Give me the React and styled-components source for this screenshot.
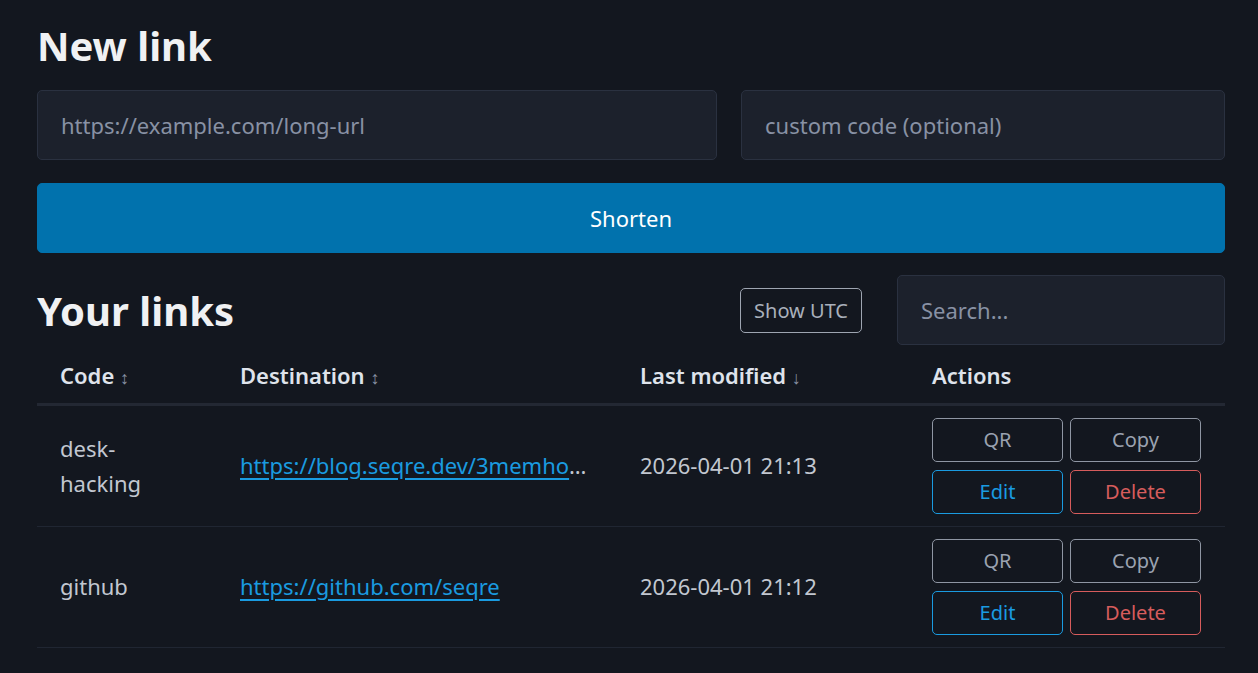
import React from "react";
import styled, { createGlobalStyle } from "styled-components";

const GlobalStyle = createGlobalStyle`
  * { box-sizing: border-box; }
  html, body { margin: 0; padding: 0; background: #13171f; }
  body {
    color: #c2c7d0;
    font-family: "Noto Sans", "Open Sans", sans-serif;
    font-size: 22px;
    line-height: 1.5;
  }
`;

const links = [
  {
    code: "desk-hacking",
    url: "https://blog.seqre.dev/3memhome-desk-hacking",
    modified: "2026-04-01 21:13",
  },
  {
    code: "github",
    url: "https://github.com/seqre",
    modified: "2026-04-01 21:12",
  },
];

export default function App() {
  return (
    <>
      <GlobalStyle />
      <Main>
        <Title>New link</Title>
        <FormRow>
          <Input placeholder="https://example.com/long-url" $wide />
          <Input placeholder="custom code (optional)" />
        </FormRow>
        <PrimaryButton>Shorten</PrimaryButton>

        <ListHeader>
          <Title as="h2">Your links</Title>
          <Tools>
            <SmallButton>Show UTC</SmallButton>
            <SearchInput placeholder="Search..." />
          </Tools>
        </ListHeader>

        <Table>
          <colgroup>
            <col style={{ width: 180 }} />
            <col style={{ width: 400 }} />
            <col style={{ width: 292 }} />
            <col style={{ width: 316 }} />
          </colgroup>
          <thead>
            <tr>
              <Th>Code <Sort>↕</Sort></Th>
              <Th>Destination <Sort>↕</Sort></Th>
              <Th>Last modified <Sort>↓</Sort></Th>
              <Th>Actions</Th>
            </tr>
          </thead>
          <tbody>
            {links.map((l) => (
              <tr key={l.code}>
                <CodeCell>{l.code}</CodeCell>
                <Td $clip>
                  <Link href={l.url}>{l.url}</Link>
                </Td>
                <Td>{l.modified}</Td>
                <Td>
                  <Actions>
                    <ActionButton>QR</ActionButton>
                    <ActionButton>Copy</ActionButton>
                    <ActionButton $tone="primary">Edit</ActionButton>
                    <ActionButton $tone="danger">Delete</ActionButton>
                  </Actions>
                </Td>
              </tr>
            ))}
          </tbody>
        </Table>
      </Main>
    </>
  );
}

const Main = styled.main`
  padding: 23px 33px 0 37px;
`;

const Title = styled.h1`
  margin: 0;
  color: #f0f1f3;
  font-size: 40px;
  font-weight: 700;
  line-height: 45px;
`;

const FormRow = styled.div`
  display: flex;
  gap: 24px;
  margin-top: 22px;
`;

const Input = styled.input`
  height: 70px;
  flex: ${(p) => (p.$wide ? "0 0 680px" : "1")};
  min-width: 0;
  padding: 0 23px;
  background: #1c212c;
  border: 1px solid #2a3140;
  border-radius: 5px;
  color: #c2c7d0;
  font-family: inherit;
  font-size: 22px;
  outline: none;
  &::placeholder { color: #8891a4; }
`;

const PrimaryButton = styled.button`
  display: block;
  width: 100%;
  height: 70px;
  margin-top: 23px;
  background: #0172ad;
  border: 1px solid #0172ad;
  border-radius: 5px;
  color: #ffffff;
  font-family: inherit;
  font-size: 22px;
  cursor: pointer;
`;

const ListHeader = styled.div`
  display: flex;
  align-items: center;
  justify-content: space-between;
  margin-top: 22px;
`;

const Tools = styled.div`
  display: flex;
  align-items: center;
  gap: 35px;
`;

const SmallButton = styled.button`
  height: 45px;
  padding: 0 13px;
  background: transparent;
  border: 1px solid #9ea5b1;
  border-radius: 5px;
  color: #a9b0bb;
  font-family: inherit;
  font-size: 20px;
  cursor: pointer;
`;

const SearchInput = styled(Input)`
  flex: 0 0 328px;
`;

const Table = styled.table`
  width: 100%;
  margin-top: 10px;
  border-collapse: collapse;
  table-layout: fixed;
`;

const Th = styled.th`
  height: 49px;
  padding: 0 23px 7px;
  text-align: left;
  font-weight: 600;
  color: #dfe3eb;
  border-bottom: 3px solid #232833;
  vertical-align: middle;
`;

const Sort = styled.span`
  font-weight: 400;
  font-size: 18px;
  color: #8891a4;
`;

const Td = styled.td`
  padding: 12px 23px 12px;
  border-bottom: 1px solid #202632;
  vertical-align: middle;
  color: #c2c7d0;
  line-height: 35px;
  ${(p) =>
    p.$clip &&
    `
    white-space: nowrap;
    overflow: hidden;
    text-overflow: ellipsis;
  `}
`;

const CodeCell = styled(Td)`
  padding-right: 60px;
`;

const Link = styled.a`
  color: #1a9be0;
  text-decoration: underline;
  text-decoration-color: #1a9be0;
  text-underline-offset: 4px;
`;

const Actions = styled.div`
  display: grid;
  grid-template-columns: 131px 131px;
  gap: 8px 7px;
`;

const toneColor = {
  primary: "#1a9be0",
  danger: "#d65c5c",
};

const ActionButton = styled.button`
  height: 44px;
  padding: 0;
  background: transparent;
  border: 1px solid ${(p) => (p.$tone ? toneColor[p.$tone] : "#8f96a3")};
  border-radius: 5px;
  color: ${(p) => (p.$tone ? toneColor[p.$tone] : "#9aa2b0")};
  font-family: inherit;
  font-size: 20px;
  cursor: pointer;
`;
